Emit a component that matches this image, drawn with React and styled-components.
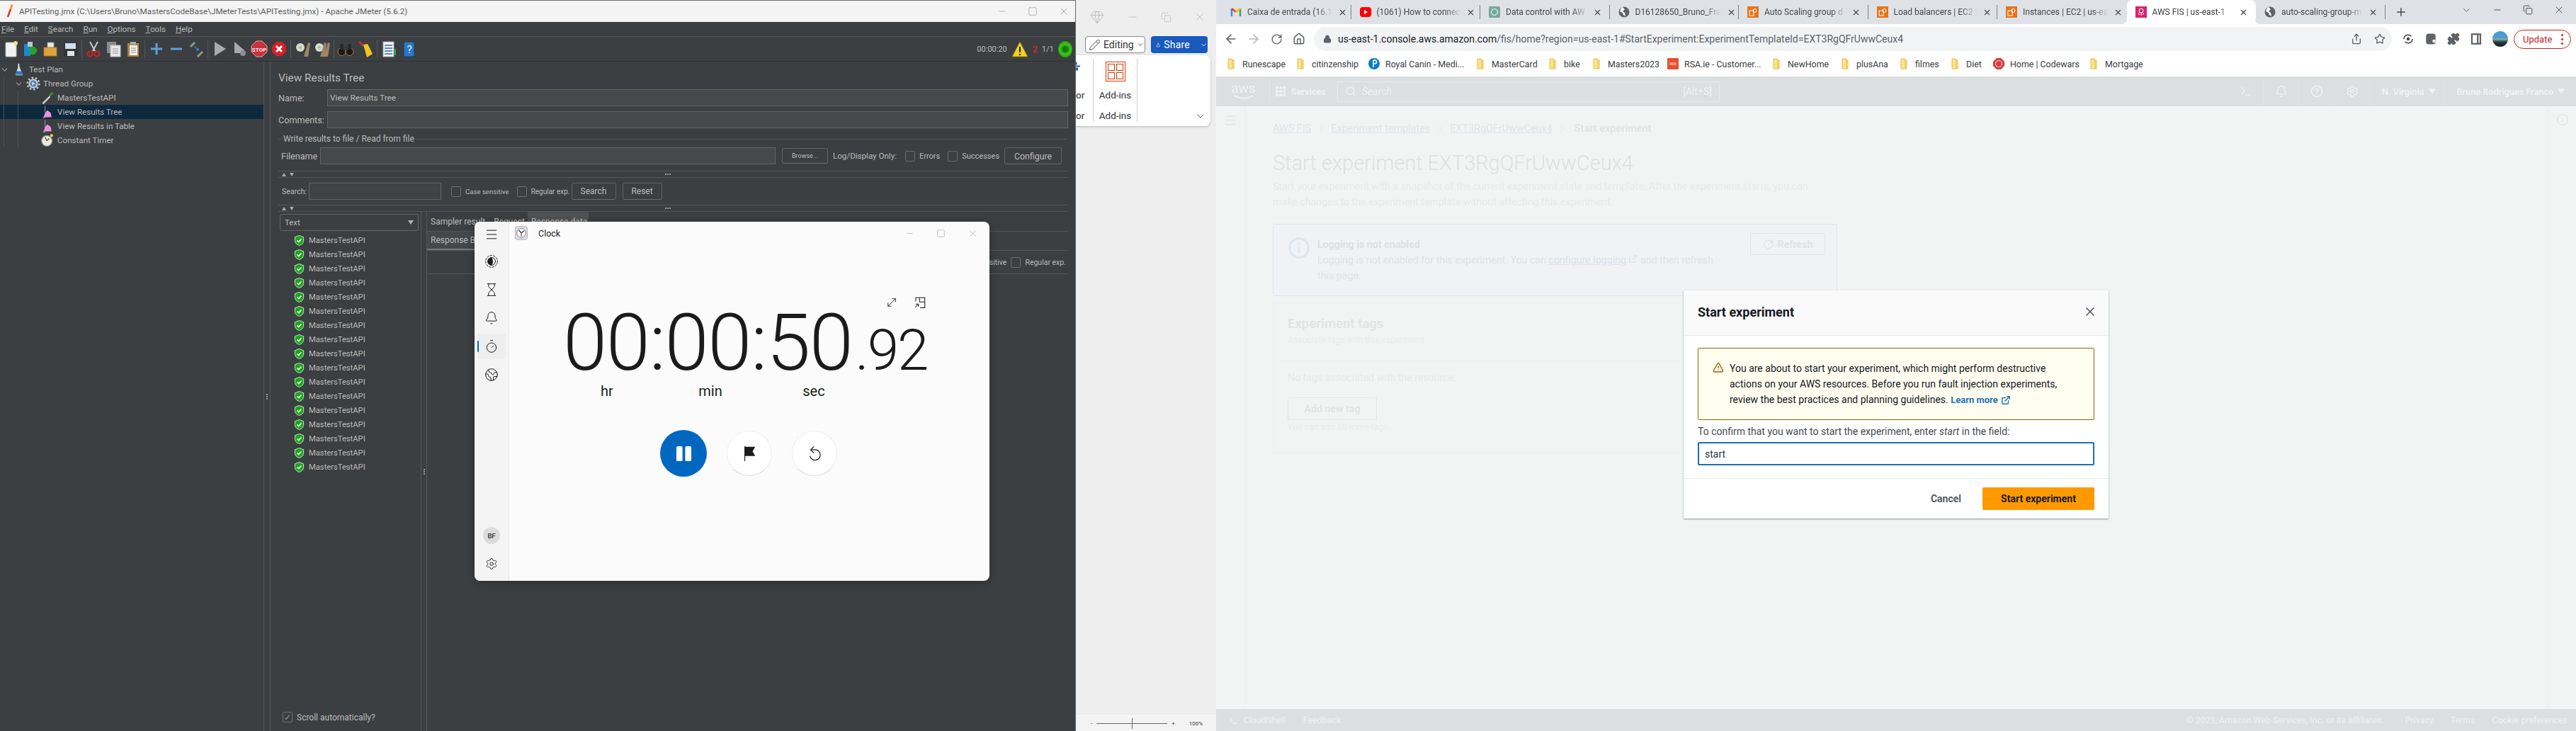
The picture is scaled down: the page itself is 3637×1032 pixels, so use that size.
import React from "react";
import styled, { createGlobalStyle } from "styled-components";
import {
  ArrowLeft, ArrowRight, Bell, ChevronDown, CircleHelp, Copy, Earth, ExternalLink, Gem,
  Home, Hourglass, Lock, Menu, Minus, MoveDiagonal, Pencil, Plus, Puzzle, RotateCw, Search,
  Settings, Share, Square, Star, Terminal, Timer, TriangleAlert, X, Info, ChevronRight,
} from "lucide-react";

const UI = `"Roboto", "Liberation Sans", sans-serif`;

const GlobalStyle = createGlobalStyle`
  html, body { margin: 0; padding: 0; overflow: hidden; background: #eeeeee; }
  * { box-sizing: border-box; }
`;

const Desktop = styled.div`
  position: relative;
  width: 3637px;
  height: 1032px;
  overflow: hidden;
  font-family: ${UI};
`;

const Win = styled.section`
  position: absolute;
  left: ${(p) => p.$x}px;
  top: ${(p) => p.$y}px;
  width: ${(p) => p.$w}px;
  height: ${(p) => p.$h}px;
  display: flex;
  flex-direction: column;
`;

/* ---------- JMeter ---------- */

const JMeterWin = styled(Win)`
  background: #3c3f41;
  color: #bbbbbb;
  font-size: 12px;
  border-top: 1px solid #6b6b6b;
  border-right: 1px solid #666;
`;
const JTitle = styled.div`
  height: 30px;
  background: #f4f4f4;
  color: #5c5c5c;
  display: flex;
  align-items: center;
  padding-left: 8px;
  font-size: 11.7px;
  flex: none;
  svg { flex: none; }
`;
const JTitleText = styled.span`
  margin-left: 7px;
  flex: 1;
`;
const WinBtns = styled.div`
  display: flex;
  align-items: center;
  color: ${(p) => p.$color || "#8a8a8a"};
  gap: ${(p) => p.$gap || 30}px;
  padding-right: ${(p) => p.$pr || 8}px;
`;
const JMenu = styled.div`
  height: 21px;
  display: flex;
  align-items: center;
  gap: 14px;
  padding-left: 2px;
  border-bottom: 1px solid #555;
  font-size: 11.6px;
  flex: none;
  u { text-underline-offset: 1px; }
`;
const JTools = styled.div`
  height: 35px;
  display: flex;
  align-items: center;
  padding-left: 1px;
  border-bottom: 1px solid #2f3234;
  flex: none;
`;
const ToolSlot = styled.div`
  width: 28px;
  height: 28px;
  display: flex;
  align-items: center;
  justify-content: center;
`;
const ToolSep = styled.div`
  width: 1px;
  height: 26px;
  background: #54575a;
  margin: 0 2px;
`;
const Status = styled.div`
  margin-left: auto;
  display: flex;
  align-items: center;
  gap: 6px;
  padding-right: 4px;
  font-size: 11px;
`;
const StatusRed = styled.span`
  color: #ff2020;
  font-size: 13px;
`;
const Ball = styled.span`
  width: 20px;
  height: 23px;
  border-radius: 50%;
  background: radial-gradient(circle, #0c7d0c 0 22%, #41c41d 45%, #1f9c0d 80%, #127a09);
`;
const JBody = styled.div`
  flex: 1;
  display: flex;
  min-height: 0;
`;
const TreePane = styled.div`
  width: 373px;
  flex: none;
  padding-top: 1px;
  position: relative;
  border-right: 1px solid #555;
  font-size: 11.6px;
`;
const TreeRow = styled.div`
  height: 20px;
  display: flex;
  align-items: center;
  padding-left: ${(p) => p.$indent}px;
  gap: 4px;
  background: ${(p) => (p.$selected ? "#0d293e" : "transparent")};
`;
const TreeArrow = styled.span`
  width: 13px;
  display: flex;
  color: #9a9a9a;
`;
const TreeGuide = styled.i`
  position: absolute;
  left: ${(p) => p.$x}px;
  top: ${(p) => p.$top}px;
  height: ${(p) => p.$h}px;
  width: 1px;
  background: #4d5153;
`;
const VSplit = styled.div`
  width: 9px;
  flex: none;
  display: flex;
  align-items: center;
  justify-content: center;
  border-right: 1px solid #555;
  ${(p) => (p.$both ? "border-left: 1px solid #555;" : "")}
  color: #9a9a9a;
  position: relative;
`;
const Dots = styled.span`
  display: flex;
  flex-direction: ${(p) => (p.$row ? "row" : "column")};
  gap: 1px;
  i { width: 2px; height: 2px; background: #b5b5b5; border-radius: 50%; display: block; }
`;
const RightPane = styled.div`
  flex: 1;
  min-width: 0;
  padding: 0 10px 0 11px;
  display: flex;
  flex-direction: column;
`;
const PaneTitle = styled.div`
  font-size: 15.4px;
  height: 22px;
  line-height: 22px;
  margin-top: 12px;
  flex: none;
`;
const FormRow = styled.div`
  display: flex;
  align-items: center;
  height: ${(p) => p.$h || 24}px;
  margin-top: ${(p) => p.$mt || 0}px;
  padding-left: ${(p) => p.$pl || 0}px;
  flex: none;
  font-size: 12.6px;
`;
const FormLabel = styled.span`
  width: ${(p) => p.$w}px;
  flex: none;
  font-size: ${(p) => p.$size || 12.6}px;
`;
const Field = styled.div`
  flex: ${(p) => (p.$w ? "none" : 1)};
  width: ${(p) => (p.$w ? `${p.$w}px` : "auto")};
  height: 100%;
  background: ${(p) => p.$bg || "#45494a"};
  border: 1px solid #646464;
  display: flex;
  align-items: center;
  padding-left: 3px;
  font-size: 11.8px;
`;
const Legend = styled.div`
  display: flex;
  align-items: center;
  margin-top: 5px;
  height: 20px;
  font-size: 12px;
  flex: none;
  &::before { content: ""; width: 4px; height: 1px; background: #555; margin-right: 3px; }
  &::after { content: ""; flex: 1; height: 1px; background: #555; margin: 0 2px 0 2px; }
`;
const JButton = styled.div`
  height: ${(p) => p.$h || 24}px;
  width: ${(p) => p.$w}px;
  flex: none;
  border: 1px solid #5e6060;
  border-bottom-color: #6a6c6c;
  border-radius: 3px;
  background: #3c3f41;
  display: flex;
  align-items: center;
  justify-content: center;
  font-size: ${(p) => p.$size || 12}px;
  margin-left: ${(p) => p.$ml || 0}px;
`;
const CheckBox = styled.span`
  width: 14px;
  height: 15px;
  flex: none;
  border: 1px solid #6b6b6b;
  border-radius: 2px;
  margin-left: ${(p) => p.$ml || 0}px;
  margin-right: 6px;
  display: flex;
  align-items: center;
  justify-content: center;
  color: #8f8f8f;
  font-size: 12px;
`;
const SmallText = styled.span`
  font-size: ${(p) => p.$size || 10.5}px;
  white-space: nowrap;
  margin-left: ${(p) => p.$ml || 0}px;
  margin-right: ${(p) => p.$mr || 0}px;
`;
const HSplit = styled.div`
  height: 10px;
  margin-top: ${(p) => p.$mt}px;
  flex: none;
  border-top: 1px solid #555;
  border-bottom: 1px solid #555;
  display: flex;
  align-items: center;
  position: relative;
  padding-left: 5px;
  gap: 5px;
`;
const HDots = styled.span`
  position: absolute;
  left: 546px;
  top: 3px;
`;
const Tri = styled.i`
  width: 0;
  height: 0;
  border-left: 3.5px solid transparent;
  border-right: 3.5px solid transparent;
  ${(p) => (p.$down ? "border-top: 5px solid #aaa;" : "border-bottom: 5px solid #aaa;")}
`;
const ResultSplit = styled.div`
  flex: 1;
  display: flex;
  min-height: 0;
`;
const ResultList = styled.div`
  width: 201px;
  flex: none;
  display: flex;
  flex-direction: column;
  padding: 3px 0 12px 2px;
  font-size: 11.2px;
`;
const Combo = styled.div`
  height: 24px;
  width: 196px;
  flex: none;
  border: 1px solid #666;
  border-radius: 3px;
  background: #3c3f41;
  display: flex;
  align-items: center;
  justify-content: space-between;
  padding: 0 6px;
  font-size: 11.4px;
`;
const ComboTri = styled.i`
  border-left: 4.5px solid transparent;
  border-right: 4.5px solid transparent;
  border-top: 6px solid #b5b5b5;
`;
const ResultRow = styled.div`
  height: 20px;
  display: flex;
  align-items: center;
  gap: 6px;
  padding-left: 20px;
`;
const ResultRows = styled.div`
  margin-top: 3px;
  flex: 1;
`;
const ScrollAuto = styled.div`
  display: flex;
  align-items: center;
  padding-left: 4px;
  font-size: 12px;
`;
const ResultDetail = styled.div`
  flex: 1;
  min-width: 0;
  display: flex;
  flex-direction: column;
`;
const TabsRow = styled.div`
  height: 28px;
  display: flex;
  align-items: center;
  border-bottom: 1px solid #555;
  padding-left: 5px;
  flex: none;
  font-size: 12px;
  gap: 12px;
  white-space: nowrap;
`;
const ActiveTab = styled.span`
  background: #4e5254;
  height: 100%;
  width: 86px;
  display: flex;
  align-items: center;
  padding-left: 5px;
  margin-left: -8px;
`;
const SubTab = styled.div`
  height: 27px;
  display: flex;
  flex: none;
  border-bottom: 1px solid #555;
`;
const SubTabLabel = styled.span`
  width: 90px;
  height: 100%;
  display: flex;
  align-items: center;
  padding-left: 5px;
  font-size: 12px;
  white-space: nowrap;
  background: #45484a;
  border-bottom: 2px solid #75787a;
`;
const DetailSearch = styled.div`
  height: 33px;
  flex: none;
  display: flex;
  align-items: center;
  justify-content: flex-end;
  border-bottom: 1px solid #555;
  padding-right: 3px;
  font-size: 13px;
`;

/* ---------- Word ---------- */

const WordWin = styled(Win)`
  background: #eeeeee;
  color: #333;
`;
const WordTop = styled.div`
  height: 48px;
  display: flex;
  align-items: center;
  justify-content: flex-end;
  color: #b5b5b5;
  flex: none;
  padding: 0 14px 0 0;
  gap: 31px;
`;
const WordActions = styled.div`
  display: flex;
  gap: 8px;
  height: 24px;
  margin-top: 3px;
  padding-left: 13px;
  flex: none;
`;
const EditingBtn = styled.div`
  width: 85px;
  border: 1px solid #8a8a8a;
  border-radius: 4px;
  background: #fff;
  display: flex;
  align-items: center;
  gap: 4px;
  padding-left: 4px;
  font-size: 14px;
`;
const ShareBtn = styled.div`
  width: 80px;
  background: #185abd;
  color: #fff;
  border-radius: 4px;
  display: flex;
  align-items: center;
  gap: 5px;
  padding-left: 7px;
  font-size: 14px;
  letter-spacing: 0.2px;
`;
const ShareCaret = styled.span`
  margin-left: 9px;
  display: flex;
`;
const Ribbon = styled.div`
  margin-top: 3px;
  width: 190px;
  height: 100px;
  background: #fff;
  border-radius: 0 8px 8px 0;
  box-shadow: 0 1px 3px rgba(0, 0, 0, 0.25);
  display: flex;
  flex: none;
  font-size: 13.5px;
`;
const RibbonCut = styled.div`
  width: 25px;
  flex: none;
  margin: 5px 0 6px;
  border-right: 1px solid #d0d0d0;
  display: flex;
  flex-direction: column;
  align-items: flex-start;
`;
const RibbonGroup = styled.div`
  width: 62px;
  flex: none;
  margin: 5px 0 6px;
  border-right: 1px solid #d0d0d0;
  display: flex;
  flex-direction: column;
  align-items: center;
`;
const RibbonIcon = styled.div`
  height: 32px;
  margin-top: 4px;
  display: flex;
`;
const RibbonText = styled.div`
  margin-top: 5px;
  height: 20px;
  line-height: 20px;
`;
const RibbonFoot = styled.div`
  margin-top: auto;
  height: 18px;
  line-height: 18px;
`;
const RibbonEnd = styled.div`
  flex: 1;
  display: flex;
  align-items: flex-end;
  justify-content: flex-end;
  padding: 0 6px 6px 0;
`;
const WordStatus = styled.div`
  margin-top: auto;
  height: 22px;
  background: #f3f3f3;
  border-top: 1px solid #fff;
  display: flex;
  align-items: center;
  font-size: 8px;
  flex: none;
  padding-left: 21px;
  color: #333;
`;
const ZoomTrack = styled.div`
  width: 100px;
  height: 1px;
  background: #666;
  margin: 0 6px;
  position: relative;
  &::after { content: ""; position: absolute; left: 50px; top: -7px; width: 1px; height: 15px; background: #666; }
`;
const ZoomPct = styled.span`
  margin-left: 20px;
`;

/* ---------- Chrome ---------- */

const ChromeWin = styled(Win)`
  background: #fff;
  color: #3c4043;
`;
const TabStrip = styled.div`
  height: 34px;
  background: #dee1e6;
  display: flex;
  align-items: center;
  padding-left: 8px;
  flex: none;
`;
const Tab = styled.div`
  width: 182.5px;
  flex: none;
  position: relative;
  height: ${(p) => (p.$active ? 34 : 20)}px;
  align-self: ${(p) => (p.$active ? "flex-end" : "center")};
  display: flex;
  align-items: center;
  padding: 0 10px 0 12px;
  font-size: 12px;
  gap: 8px;
  border-right: 1px solid ${(p) => (p.$active || p.$noline ? "transparent" : "#7f8388")};
  background: ${(p) => (p.$active ? "#fff" : "transparent")};
  border-radius: ${(p) => (p.$active ? "8px 8px 0 0" : "0")};
  color: ${(p) => (p.$active ? "#3c4043" : "#45494e")};
  svg { flex: none; }
  ${(p) => p.$active && `
    &::before, &::after {
      content: "";
      position: absolute;
      bottom: 0;
      width: 8px;
      height: 8px;
    }
    &::before { left: -8px; background: radial-gradient(circle at 0 0, #dee1e6 8px, #fff 8.5px); }
    &::after { right: -8px; background: radial-gradient(circle at 100% 0, #dee1e6 8px, #fff 8.5px); }
  `}
`;
const TabLabel = styled.span`
  flex: 1;
  white-space: nowrap;
  -webkit-mask-image: linear-gradient(90deg, #000 82%, transparent);
  mask-image: linear-gradient(90deg, #000 82%, transparent);
`;
const NewTab = styled.div`
  width: 44px;
  display: flex;
  justify-content: center;
  color: #45494e;
`;
const ChromeCtl = styled.div`
  margin-left: auto;
  display: flex;
  align-items: center;
  gap: 29px;
  padding-right: 16px;
  color: #3c4043;
  height: 100%;
  padding-bottom: 6px;
`;
const UrlBar = styled.div`
  height: 38px;
  display: flex;
  align-items: center;
  flex: none;
  padding: 4px 8px 0 5px;
`;
const NavBtn = styled.div`
  width: 32px;
  display: flex;
  justify-content: center;
  color: ${(p) => (p.$off ? "#b5b8bc" : "#5f6368")};
  flex: none;
`;
const Omni = styled.div`
  flex: none;
  width: 1522px;
  height: 34px;
  margin-left: 5px;
  border-radius: 17px;
  background: #f1f3f4;
  display: flex;
  align-items: center;
  padding: 0 9px 0 13px;
  font-size: 14px;
  color: #5f6368;
  gap: 9px;
`;
const UrlHost = styled.span`
  color: #202124;
`;
const OmniRight = styled.div`
  margin-left: auto;
  display: flex;
  gap: 17px;
  color: #5f6368;
`;
const ExtIcons = styled.div`
  display: flex;
  align-items: center;
  gap: 14px;
  color: #5f6368;
  padding-left: 14px;
  flex: none;
`;
const Avatar = styled.span`
  width: 22px;
  height: 22px;
  border-radius: 50%;
  background: linear-gradient(180deg, #4b9bd0 0 45%, #8fb7b0 50%, #2c3a3e 70%, #16191a);
`;
const UpdatePill = styled.div`
  margin-left: 8px;
  width: 81px;
  height: 27px;
  flex: none;
  border: 1px solid #c5221f;
  border-radius: 14px;
  display: flex;
  align-items: center;
  color: #c5221f;
  font-size: 13px;
  padding-left: 12px;
  justify-content: space-between;
  padding-right: 10px;
`;
const KebabDots = styled.span`
  display: flex;
  flex-direction: column;
  gap: 3px;
  i { width: 3px; height: 3px; border-radius: 50%; background: #c5221f; display: block; }
`;
const Bookmarks = styled.div`
  height: 36px;
  display: flex;
  align-items: center;
  padding-left: 13px;
  flex: none;
  font-size: 12.4px;
  color: #3c4043;
`;
const Bookmark = styled.div`
  width: ${(p) => p.$w}px;
  flex: none;
  display: flex;
  align-items: center;
  gap: 8px;
  white-space: nowrap;
  svg { flex: none; }
`;

/* AWS console behind its modal backdrop */
const AwsNav = styled.div`
  height: 42px;
  background: #dcdfdf;
  color: #f0f2f2;
  display: flex;
  align-items: center;
  flex: none;
  font-size: 12.6px;
`;
const AwsLogo = styled.div`
  width: 59px;
  margin-left: 17px;
  height: 30px;
  display: flex;
  flex-direction: column;
  align-items: center;
  justify-content: center;
  border-right: 1px solid #e3e6e6;
  padding-right: 15px;
  font-size: 19px;
  line-height: 16px;
  flex: none;
`;
const AwsServices = styled.div`
  width: 95px;
  display: flex;
  align-items: center;
  gap: 7px;
  padding-left: 7px;
  font-weight: 700;
  flex: none;
`;
const AwsSearch = styled.div`
  width: 540px;
  height: 29px;
  border: 1px solid #e8eaea;
  border-radius: 2px;
  display: flex;
  align-items: center;
  padding: 0 10px;
  gap: 8px;
  flex: none;
  font-size: 14px;
`;
const AwsSearchText = styled.em`
  flex: 1;
`;
const AwsRight = styled.div`
  margin-left: auto;
  display: flex;
  align-items: center;
  font-weight: 700;
  height: 100%;
  padding-right: 4px;
`;
const AwsNavIcon = styled.div`
  width: 50px;
  height: 100%;
  display: flex;
  align-items: center;
  justify-content: center;
  border-right: 1px solid #e1e4e4;
`;
const AwsMenu = styled.div`
  display: flex;
  align-items: center;
  gap: 6px;
  height: 100%;
  padding: 0 12px 0 17px;
  border-right: ${(p) => (p.$last ? "none" : "1px solid #e1e4e4")};
`;
const SmallTri = styled.i`
  border-left: 5px solid transparent;
  border-right: 5px solid transparent;
  border-top: 8px solid #f0f2f2;
`;
const AwsContent = styled.div`
  flex: 1;
  min-height: 0;
  display: flex;
  background: #f2f4f4;
`;
const Rail = styled.div`
  width: ${(p) => p.$w}px;
  flex: none;
  color: #e3e6e6;
  ${(p) => (p.$right ? "border-left" : "border-right")}: 1px solid #ebeded;
  display: flex;
  justify-content: center;
  padding-top: 10px;
`;
const AwsMain = styled.div`
  flex: 1;
  min-width: 0;
  padding: 20px 0 0 39px;
`;
const Crumbs = styled.div`
  height: 22px;
  display: flex;
  align-items: center;
  gap: 5px;
  font-size: 14.4px;
  color: #dfe4e9;
  svg { color: #e4e7e7; }
`;
const CrumbLink = styled.span`
  text-decoration: underline;
`;
const CrumbNow = styled.span`
  color: #e2e4e4;
  font-weight: 700;
  margin-left: 3px;
`;
const PageTitle = styled.h1`
  margin: 18px 0 0;
  height: 40px;
  line-height: 40px;
  font-size: 29px;
  font-weight: 300;
  color: #dee0e0;
`;
const PageDesc = styled.p`
  margin: 2px 0 0;
  line-height: 22px;
  font-size: 14.2px;
  color: #e7e9e9;
`;
const InfoBox = styled.div`
  margin-top: 20px;
  width: 797px;
  height: 102px;
  background: #f0f2f6;
  border: 1px solid #e0e6ee;
  border-radius: 2px;
  padding: 17px 16px 0 20px;
  display: flex;
  color: #e0e2e6;
  font-size: 14.2px;
  line-height: 22px;
`;
const InfoGlyph = styled.span`
  flex: none;
  display: flex;
  height: 32px;
  color: #dde6ee;
`;
const InfoBody = styled.div`
  margin-left: 10px;
  flex: 1;
  svg { color: #d9e3ec; }
`;
const InfoHead = styled.div`
  font-weight: 700;
  color: #dcdfe3;
`;
const InfoLink = styled.span`
  color: #d9e3ec;
  text-decoration: underline;
`;
const RefreshBtn = styled.div`
  width: 106px;
  height: 31px;
  margin-top: -5px;
  border: 1px solid #e0e5ea;
  border-radius: 2px;
  display: flex;
  align-items: center;
  justify-content: center;
  gap: 5px;
  font-weight: 700;
  flex: none;
`;
const Card = styled.div`
  margin-top: 9px;
  width: 800px;
  height: 213px;
  border: 1px solid #eef0f0;
  border-radius: 2px;
`;
const CardHead = styled.div`
  height: 81px;
  padding: 16px 0 0 20px;
  border-bottom: 1px solid #eef0f0;
`;
const CardTitle = styled.div`
  font-size: 18.5px;
  font-weight: 700;
  height: 26px;
  line-height: 26px;
  color: #e2e4e4;
`;
const CardSub = styled.div`
  font-size: 12.2px;
  color: #e9ebeb;
  line-height: 18px;
  margin-top: 1px;
`;
const CardBody = styled.div`
  padding: 16px 0 0 20px;
  font-size: 14.2px;
  color: #e7e9e9;
`;
const TagBtn = styled.div`
  margin-top: 20px;
  width: 126px;
  height: 32px;
  border: 1px solid #e4e6e6;
  border-radius: 2px;
  display: flex;
  align-items: center;
  justify-content: center;
  font-weight: 700;
  color: #e2e4e4;
`;
const TagHint = styled.div`
  margin-top: 3px;
  font-size: 12.2px;
  color: #e9ebeb;
`;
const AwsFooter = styled.div`
  height: 31px;
  background: #dcdfdf;
  color: #eff1f1;
  display: flex;
  align-items: center;
  padding: 0 12px 0 17px;
  font-size: 12.4px;
  flex: none;
  gap: 8px;
`;
const FootLink = styled.span`
  margin-left: ${(p) => (p.$auto ? "auto" : `${p.$ml || 0}px`)};
  white-space: nowrap;
`;

/* start experiment modal */
const Modal = styled(Win)`
  background: #fff;
  box-shadow: 0 1px 2px rgba(0, 28, 36, 0.45);
  color: #16191f;
  font-family: ${UI};
`;
const ModalHead = styled.header`
  height: 64px;
  flex: none;
  background: #fafafa;
  border-bottom: 1px solid #eaeded;
  display: flex;
  align-items: center;
  justify-content: space-between;
  padding: 0 16px 3px 20px;
  font-size: 18px;
  font-weight: 700;
  svg { color: #545b64; }
`;
const ModalBody = styled.div`
  padding: 17px 20px 0;
  height: 137px;
  flex: 1;
`;
const Alert = styled.div`
  height: 102px;
  background: #fffdf0;
  border: 1px solid #8d6605;
  border-radius: 2px;
  display: flex;
  padding: 17px 8px 0 20px;
  font-size: 14px;
  line-height: 22px;
  gap: 8px;
  svg { color: #8d6605; flex: none; margin-top: 2px; }
`;
const LearnMore = styled.span`
  color: #1e73b8;
  font-weight: 700;
  font-size: 13px;
  display: inline-flex;
  align-items: center;
  gap: 4px;
  svg { color: #1e73b8; margin-top: 0; }
`;
const ConfirmLabel = styled.div`
  margin-top: 5px;
  height: 22px;
  line-height: 22px;
  font-size: 14px;
  color: #444b53;
  margin-bottom: 4px;
`;
const ConfirmInput = styled.div`
  height: 33px;
  border: 2px solid #1c6fb5;
  border-radius: 2px;
  padding-left: 8px;
  display: flex;
  align-items: center;
  font-size: 14px;
  color: #2f3640;
`;
const ModalFoot = styled.footer`
  height: 57px;
  flex: none;
  border-top: 1px solid #eaeded;
  display: flex;
  align-items: center;
  justify-content: flex-end;
  padding: 0 20px;
  font-weight: 700;
  font-size: 14px;
`;
const CancelBtn = styled.span`
  color: #545b64;
  margin-right: 30px;
`;
const PrimaryBtn = styled.div`
  width: 158px;
  height: 32px;
  background: #ff9900;
  border-radius: 2px;
  display: flex;
  align-items: center;
  justify-content: center;
  color: #16191f;
`;

/* ---------- Clock ---------- */

const ClockWin = styled(Win)`
  flex-direction: row;
  background: #fbfbfb;
  border-radius: 8px;
  overflow: hidden;
  color: #1b1b1b;
  box-shadow: 0 2px 12px rgba(0, 0, 0, 0.3);
`;
const ClockSide = styled.nav`
  width: 49px;
  flex: none;
  background: #f4f4f4;
  border-right: 1px solid #e8e8e8;
  display: flex;
  flex-direction: column;
  align-items: center;
  padding-bottom: 4px;
`;
const SideItem = styled.div`
  width: 40px;
  height: ${(p) => (p.$active ? 36 : p.$h || 40)}px;
  display: flex;
  align-items: center;
  justify-content: center;
  position: relative;
  border-radius: 4px;
  flex: none;
  margin: ${(p) => (p.$auto ? "auto 0 0" : p.$active ? "2px 0" : "0")};
  background: ${(p) => (p.$active ? "#eeeeee" : "transparent")};
  &::before {
    content: ${(p) => (p.$active ? '""' : "none")};
    position: absolute;
    left: 0;
    top: 10px;
    width: 2px;
    height: 16px;
    background: #0067c0;
    border-radius: 2px;
  }
`;
const Initials = styled.span`
  width: 24px;
  height: 24px;
  border-radius: 50%;
  background: #dcdcdc;
  display: flex;
  align-items: center;
  justify-content: center;
  font-size: 9.5px;
  font-weight: 500;
  color: #333;
`;
const ClockMain = styled.div`
  flex: 1;
  min-width: 0;
  display: flex;
  flex-direction: column;
`;
const ClockTitle = styled.div`
  height: 32px;
  flex: none;
  display: flex;
  align-items: center;
  padding-left: 7px;
  gap: 14px;
  font-size: 12.5px;
`;
const ClockTitleName = styled.span`
  flex: 1;
`;
const ExpandRow = styled.div`
  margin-top: 72px;
  height: 20px;
  flex: none;
  display: flex;
  justify-content: flex-end;
  align-items: center;
  gap: 22px;
  padding-right: 89px;
`;
const TimeRow = styled.div`
  margin-top: -3px;
  height: 100px;
  line-height: 100px;
  padding-left: 76px;
  font-size: 112px;
  font-weight: 300;
  letter-spacing: -1.4px;
  white-space: nowrap;
  flex: none;
  color: #1b1b1b;
`;
const Fraction = styled.span`
  font-size: 80px;
  letter-spacing: -2px;
  margin-left: 4px;
`;
const UnitRow = styled.div`
  margin-top: 5px;
  display: flex;
  padding-left: 65px;
  font-size: 20px;
  flex: none;
  height: 26px;
  line-height: 26px;
`;
const Unit = styled.span`
  width: 146px;
  text-align: center;
`;
const ButtonRow = styled.div`
  margin-top: 42px;
  display: flex;
  align-items: center;
  padding-left: 213px;
  gap: 28px;
  flex: none;
`;
const RoundBtn = styled.div`
  width: ${(p) => (p.$primary ? 66 : 64)}px;
  height: ${(p) => (p.$primary ? 66 : 64)}px;
  border-radius: 50%;
  display: flex;
  align-items: center;
  justify-content: center;
  background: ${(p) => (p.$primary ? "#0067c0" : "#fff")};
  border: ${(p) => (p.$primary ? "none" : "1px solid #ececec")};
  border-bottom-color: #d4d4d4;
  color: ${(p) => (p.$primary ? "#fff" : "#1b1b1b")};
`;

/* ---------- drawn icons ---------- */

const svg = (content, size = 24, box = 24) => (
  <svg width={size} height={size} viewBox={`0 0 ${box} ${box}`}>{content}</svg>
);

const FolderIcon = () => svg(
  <g>
    <path d="M4 1h5l1 2h2v12H4z" fill="#fde293" stroke="#e8b93e" strokeWidth="1" />
    <path d="M10 3v12" stroke="#e8b93e" />
  </g>, 16, 16);

const ShieldIcon = () => svg(
  <g>
    <path d="M8 .5 14.500 3v5c0 3.800-2.800 6.200-6.500 7.500C4.300 14.200 1.500 11.800 1.500 8V3z" fill="#18a818" stroke="#d8e8d8" />
    <path d="m4.800 8 2.300 2.300 4-4.300" fill="none" stroke="#fff" strokeWidth="1.700" />
  </g>, 15, 16);

const ServicesGrid = () => svg(
  <g fill="#f0f2f2">
    {[1, 6.500, 12].map((x) => [1, 6.500, 12].map((y) => (
      <rect key={`${x}-${y}`} x={x} y={y} width="4" height="4" />
    )))}
  </g>, 16, 17);

const ToolIcons = [
  [
    <g key="n"><rect x="5" y="3" width="15" height="20" rx="1" fill="#f2f2f2" stroke="#bbb" /><circle cx="19" cy="4" r="3" fill="#f6e27a" /></g>,
    <g key="t"><rect x="3" y="5" width="9" height="17" fill="#1e88c9" /><rect x="8" y="2" width="7" height="7" fill="#b9c6cf" /><path d="M11 9h7l4 5-4 6h-7z" fill="#22a52b" /></g>,
    <g key="o"><path d="M8 3h9v9H8z" fill="#e8e8e8" stroke="#999" /><path d="M3 10h18v12H3z" fill="#dca43a" stroke="#a97a22" /></g>,
    <g key="s"><rect x="3" y="3" width="19" height="20" rx="1" fill="#30353a" /><rect x="5" y="4" width="15" height="8" fill="#cfe0f2" /><rect x="8" y="15" width="10" height="7" fill="#dfe3e6" /></g>,
  ],
  [
    <g key="c" fill="none"><path d="m7 2 7 13M18 2l-7 13" stroke="#c9c9c9" strokeWidth="2" /><circle cx="7" cy="19" r="3.500" stroke="#d61e1e" strokeWidth="2" /><circle cx="17" cy="19" r="3.500" stroke="#d61e1e" strokeWidth="2" /></g>,
    <g key="cp"><rect x="3" y="2" width="13" height="16" fill="#8b8b8b" /><rect x="8" y="7" width="14" height="16" fill="#e8e8e8" stroke="#bbb" /><path d="M11 12h8M11 15h8M11 18h8" stroke="#999" /></g>,
    <g key="p"><rect x="4" y="4" width="16" height="19" fill="#b57f37" /><rect x="7" y="7" width="11" height="14" fill="#f2f2f2" /><rect x="8" y="2" width="8" height="4" fill="#aaa" /><path d="M9 11h7M9 14h7M9 17h7" stroke="#888" /></g>,
  ],
  [
    <path key="a" d="M12 4v16M4 12h16" stroke="#5d9fd8" strokeWidth="3" />,
    <path key="m" d="M4 12h16" stroke="#5d9fd8" strokeWidth="3" />,
    <g key="e"><path d="m4 9 6-6" stroke="#8a9a8a" strokeWidth="3" /><path d="m14 23 7-7" stroke="#8a9a8a" strokeWidth="3" /><path d="m10 9 5 5m0-3v3h-3" stroke="#3b82d0" strokeWidth="1.500" fill="none" /></g>,
  ],
  [
    <path key="pl" d="M5 2 21 12 5 22z" fill="#a9aaab" />,
    <g key="pn"><path d="M5 2 19 14l-4 4H5z" fill="#a9aaab" /><circle cx="17" cy="18" r="4" fill="#8b8d8e" /></g>,
    <g key="st"><path d="M8 1h8l7 7v8l-7 7H8l-7-7V8z" fill="#c8323c" stroke="#e2a5a9" /><text x="12" y="15.500" textAnchor="middle" fontSize="8" fontWeight="700" fill="#eee" fontFamily={UI}>STOP</text></g>,
    <g key="sd"><path d="M8 2h8l6 6v8l-6 6H8l-6-6V8z" fill="#d61f26" /><path d="m8 8 8 8M16 8l-8 8" stroke="#fff" strokeWidth="3" /></g>,
  ],
  [
    <g key="cl"><circle cx="9" cy="10" r="6" fill="#d8d8d8" /><circle cx="9" cy="10" r="2" fill="#8fd14f" /><path d="M14 23 20 3l3 1-3 19z" fill="#a08563" /></g>,
    <g key="ca"><circle cx="8" cy="10" r="6" fill="#d8d8d8" /><circle cx="8" cy="10" r="2" fill="#8fd14f" /><path d="M9 23 15 3l3 1-3 19zM14 23 20 3l3 1-3 19z" fill="#a08563" /></g>,
  ],
  [
    <g key="b"><circle cx="6.500" cy="16" r="5.500" fill="#1c1a18" stroke="#a87b52" /><circle cx="17.500" cy="16" r="5.500" fill="#1c1a18" stroke="#a87b52" /><rect x="4" y="5" width="5" height="8" fill="#2c2a28" /><rect x="15" y="5" width="5" height="8" fill="#2c2a28" /><rect x="9" y="8" width="6" height="6" fill="#3c3a38" /></g>,
    <g key="br"><path d="m3 2 7 6" stroke="#b5372a" strokeWidth="3" /><path d="m9 6 6-1 7 14-8 5z" fill="#efc71d" /></g>,
  ],
  [
    <g key="l"><rect x="4" y="2" width="15" height="21" fill="#f4f4f4" stroke="#aaa" /><path d="M6 7h11M6 11h11M6 15h11M6 19h11" stroke="#2867b2" strokeWidth="1.500" /><rect x="19" y="12" width="3" height="9" fill="#2fa243" /></g>,
    <g key="h"><rect x="5" y="2" width="15" height="21" fill="#2a77c4" stroke="#123a62" /><text x="13" y="18" textAnchor="middle" fontSize="15" fill="#eaf2fb" fontFamily={UI}>?</text></g>,
  ],
];

const FlaskIcon = () => svg(
  <g>
    <path d="M10 2h2l1 7 5 11c.400 1.500 0 2-1 2H7c-1 0-1.400-.500-1-2l4-11z" fill="#d8dde2" />
    <path d="M7.500 15h9l2 6H6z" fill="#2b78c8" />
  </g>, 20);
const GearIcon = () => svg(
  <g>
    <circle cx="12" cy="12" r="8" fill="#c7ccd2" />
    <circle cx="12" cy="12" r="10" fill="none" stroke="#c7ccd2" strokeWidth="3" strokeDasharray="3 3.280" />
    <circle cx="12" cy="12" r="5.500" fill="#4d83c4" />
    <path d="M10 9v6l5-3z" fill="#dde4ec" />
  </g>, 20);
const PipetteIcon = () => svg(
  <g>
    <path d="m3 21 12-12 2 2L5 23z" fill="#d0d0d0" />
    <path d="m14 8 5-6 3 3-6 5z" fill="#3f8f41" />
  </g>, 20);
const ChartIcon = () => svg(
  <g>
    <path d="M8 2v20H4" fill="none" stroke="#aab" />
    <path d="M4 21c3 0 3-8 8-12l3 3c2-1 3 2 4 9z" fill="#ef8fe0" />
  </g>, 20);
const WatchIcon = () => svg(
  <g>
    <circle cx="11" cy="13" r="9" fill="#ecebd8" stroke="#8d8d8d" strokeWidth="1.500" />
    <path d="M11 13 8 7M11 13l4-4" stroke="#444" strokeWidth="1.500" />
    <circle cx="19" cy="4" r="2.500" fill="#f4d23a" />
  </g>, 20);

const ClockAppIcon = () => svg(
  <g>
    <rect x="2" y="1" width="20" height="22" rx="3" fill="#d8dee4" stroke="#9aa4ad" />
    <circle cx="12" cy="12" r="7.500" fill="#fff" stroke="#6b7680" />
    <path d="M12 12 8 7M12 12l5-4" stroke="#333" strokeWidth="1.500" />
    <path d="M12 12v6" stroke="#d8382e" strokeWidth="1.500" />
  </g>, 20);

const GmailIcon = () => svg(
  <g fill="none" strokeWidth="2.500">
    <path d="M2 14V3" stroke="#4285f4" />
    <path d="M14 14V3" stroke="#34a853" />
    <path d="M2 3l6 5" stroke="#ea4335" />
    <path d="M14 3 8 8" stroke="#fbbc04" />
  </g>, 16, 16);
const YoutubeIcon = () => svg(
  <g>
    <rect y="1" width="16" height="14" rx="4" fill="#f00" />
    <path d="M6 5v6l5-3z" fill="#fff" />
  </g>, 16, 16);
const GptIcon = () => svg(
  <g>
    <rect width="16" height="16" rx="2" fill="#74aa9c" />
    <circle cx="8" cy="8" r="4.500" fill="none" stroke="#fff" strokeWidth="1.200" strokeDasharray="3 1" />
  </g>, 16, 16);
const GlobeIcon = () => svg(
  <g>
    <circle cx="8" cy="8" r="7.500" fill="#5f6368" />
    <path d="M6 1 9 4 6 7l3 2 1 5-3-2-1-3-4-2 2-5z" fill="#fff" />
  </g>, 16, 16);
const AwsTabIcon = () => svg(
  <g>
    <rect width="16" height="16" fill="#e5741a" />
    <rect x="3" y="6" width="6" height="7" fill="none" stroke="#fff" />
    <circle cx="10.500" cy="6" r="2.500" fill="none" stroke="#fff" />
  </g>, 16, 16);
const FisIcon = () => svg(
  <g>
    <rect width="16" height="16" fill="#d6246e" />
    <circle cx="8" cy="6" r="3" fill="none" stroke="#fff" />
    <path d="M5 9v3M8 9v4M11 9v3" stroke="#fff" />
  </g>, 16, 16);
const RoyalIcon = () => svg(
  <g>
    <circle cx="8" cy="8" r="8" fill="#0a7cc4" />
    <path d="M7 3v10M7 3h2a2.500 2.500 0 0 1 0 5H7" fill="none" stroke="#fff" strokeWidth="1.600" />
  </g>, 16, 16);
const RsaIcon = () => svg(
  <g>
    <rect width="16" height="16" rx="1" fill="#e5502c" />
    <text x="8" y="10" fontSize="5" textAnchor="middle" fill="#fff" fontFamily={UI}>RSA</text>
  </g>, 16, 16);
const CodewarsIcon = () => svg(
  <g>
    <path d="M5 0h6l5 5v6l-5 5H5l-5-5V5z" fill="#d63b3b" />
    <circle cx="8" cy="8" r="4.500" fill="none" stroke="#fff" strokeWidth="1.200" strokeDasharray="2 1" />
  </g>, 16, 16);

const AddInsIcon = () => svg(
  <g fill="none" stroke="#d83b01" strokeWidth="1">
    <rect x=".5" y=".5" width="27" height="27" />
    <rect x="3.500" y="3.500" width="9" height="9" />
    <rect x="15.500" y="3.500" width="9" height="9" />
    <rect x="3.500" y="15.500" width="9" height="9" />
    <rect x="15.500" y="15.500" width="9" height="9" />
  </g>, 28, 28);

const BlueCut = () => svg(
  <g fill="#185abd">
    <rect x="0" y="1" width="3" height="8" />
    <rect x="0" y="11" width="12" height="4" />
    <rect x="0" y="17" width="6" height="8" />
  </g>, 14, 28);

const FocusIcon = () => svg(
  <g fill="none" stroke="#1b1b1b" strokeWidth="1.200">
    <circle cx="12" cy="12" r="10" strokeDasharray="4 1.500" />
    <circle cx="12" cy="12" r="6.500" />
    <path d="M12 5.500a6.500 6.500 0 0 0 0 13c3-2 3-9 0-13z" fill="#1b1b1b" stroke="none" />
  </g>, 20);
const MiniIcon = () => svg(
  <g fill="none" stroke="#1b1b1b" strokeWidth="1.400">
    <path d="M4 10V3h17v19h-9" />
    <path d="M11 3v8h10" />
    <path d="m3 21 6-6M4 15h5v5" />
  </g>, 18);
const FlagIcon = () => svg(
  <g>
    <path d="M5 1v23" stroke="#1b1b1b" strokeWidth="1.300" />
    <path d="M5 2h16l-4 7 4 7H5z" fill="#1b1b1b" />
  </g>, 22);
const ResetIcon = () => svg(
  <g fill="none" stroke="#1b1b1b" strokeWidth="1.300">
    <path d="M7 6.500h6a8 8 0 1 1-8 9.500" />
    <path d="M11 1.500 6 6.500l5 5" />
  </g>, 22);
const PauseIcon = () => svg(
  <g fill="#fff">
    <rect x="1" y="1" width="9" height="22" rx="2" />
    <rect x="14" y="1" width="9" height="22" rx="2" />
  </g>, 23);
const ExtSync = () => svg(
  <g fill="none" stroke="#444" strokeWidth="2">
    <path d="M4 12a8 8 0 0 1 14-5M20 12a8 8 0 0 1-14 5" />
    <circle cx="12" cy="12" r="2" fill="#444" />
  </g>, 18);
const ExtVideo = () => svg(
  <g>
    <rect x="3" y="2" width="18" height="20" rx="5" fill="#5f6368" />
    <circle cx="18" cy="16" r="3" fill="#fff" />
  </g>, 18);
const SidePanel = () => svg(
  <g fill="none" stroke="#5f6368" strokeWidth="3">
    <rect x="4" y="3" width="16" height="18" />
    <path d="M15 3v18" />
  </g>, 18);

/* ---------- data ---------- */

const MENU = [["F", "ile"], ["E", "dit"], ["S", "earch"], ["R", "un"], ["O", "ptions"], ["T", "ools"], ["H", "elp"]];

const RESULT_ROWS = Array.from({ length: 17 }, (_, i) => i);

const TABS = [
  { icon: <GmailIcon />, label: "Caixa de entrada (16.1" },
  { icon: <YoutubeIcon />, label: "(1061) How to connec" },
  { icon: <GptIcon />, label: "Data control with AW" },
  { icon: <GlobeIcon />, label: "D16128650_Bruno_Fra" },
  { icon: <AwsTabIcon />, label: "Auto Scaling group d" },
  { icon: <AwsTabIcon />, label: "Load balancers | EC2 |" },
  { icon: <AwsTabIcon />, label: "Instances | EC2 | us-ea", noline: true },
  { icon: <FisIcon />, label: "AWS FIS | us-east-1", active: true },
  { icon: <GlobeIcon />, label: "auto-scaling-group-m" },
];

const BOOKMARKS = [
  { w: 98, icon: <FolderIcon />, label: "Runescape" },
  { w: 104, icon: <FolderIcon />, label: "citinzenship" },
  { w: 150, icon: <RoyalIcon />, label: "Royal Canin - Medi..." },
  { w: 102, icon: <FolderIcon />, label: "MasterCard" },
  { w: 62, icon: <FolderIcon />, label: "bike" },
  { w: 108, icon: <FolderIcon />, label: "Masters2023" },
  { w: 146, icon: <RsaIcon />, label: "RSA.ie - Customer..." },
  { w: 97, icon: <FolderIcon />, label: "NewHome" },
  { w: 83, icon: <FolderIcon />, label: "plusAna" },
  { w: 72, icon: <FolderIcon />, label: "filmes" },
  { w: 62, icon: <FolderIcon />, label: "Diet" },
  { w: 134, icon: <CodewarsIcon />, label: "Home | Codewars" },
  { w: 90, icon: <FolderIcon />, label: "Mortgage" },
];

const SIDE_ITEMS = [
  { icon: <FocusIcon /> },
  { icon: <Hourglass size={20} strokeWidth={1.2} /> },
  { icon: <Bell size={20} strokeWidth={1.2} /> },
  { icon: <Timer size={20} strokeWidth={1.2} />, active: true },
  { icon: <Earth size={20} strokeWidth={1.2} /> },
];

const JMeter = () => (
  <JMeterWin $x={0} $y={0} $w={1519} $h={1032}>
    <JTitle>
      <svg width="12" height="20" viewBox="0 0 12 20"><path d="M9 1 3 18" stroke="#d8382e" strokeWidth="2.500" /><path d="M9 1 7 7" stroke="#f0a02c" strokeWidth="2.500" /></svg>
      <JTitleText>APITesting.jmx (C:\Users\Bruno\MastersCodeBase\JMeterTests\APITesting.jmx) - Apache JMeter (5.6.2)</JTitleText>
      <WinBtns $gap={29}>
        <Minus size={14} strokeWidth={1} />
        <Square size={14} strokeWidth={1} />
        <X size={16} strokeWidth={1} />
      </WinBtns>
    </JTitle>
    <JMenu>
      {MENU.map(([first, rest]) => (
        <span key={first}><u>{first}</u>{rest}</span>
      ))}
    </JMenu>
    <JTools>
      {ToolIcons.map((group, i) => (
        <React.Fragment key={i}>
          {i > 0 && <ToolSep />}
          {group.map((icon, j) => <ToolSlot key={j}>{svg(icon)}</ToolSlot>)}
        </React.Fragment>
      ))}
      <Status>
        <span>00:00:20</span>
        <svg width="24" height="24" viewBox="0 0 24 24"><path d="M12 2 23 23H1z" fill="#f4d31c" stroke="#8a7a10" /><path d="M12 9v8M12 19v2" stroke="#222" strokeWidth="2.200" /></svg>
        <StatusRed>2</StatusRed>
        <span>1/1</span>
        <Ball />
      </Status>
    </JTools>
    <JBody>
      <TreePane>
        <TreeGuide $x={5} $top={20} $h={100} />
        <TreeGuide $x={25} $top={40} $h={80} />
        <TreeRow $indent={0}>
          <TreeArrow><ChevronDown size={13} /></TreeArrow>
          <FlaskIcon />Test Plan
        </TreeRow>
        <TreeRow $indent={20}>
          <TreeArrow><ChevronDown size={13} /></TreeArrow>
          <GearIcon />Thread Group
        </TreeRow>
        <TreeRow $indent={57}><PipetteIcon />MastersTestAPI</TreeRow>
        <TreeRow $indent={57} $selected><ChartIcon />View Results Tree</TreeRow>
        <TreeRow $indent={57}><ChartIcon />View Results in Table</TreeRow>
        <TreeRow $indent={57}><WatchIcon />Constant Timer</TreeRow>
      </TreePane>
      <VSplit><Dots><i /><i /><i /></Dots></VSplit>
      <RightPane>
        <PaneTitle>View Results Tree</PaneTitle>
        <FormRow $mt={5}>
          <FormLabel $w={69}>Name:</FormLabel>
          <Field>View Results Tree</Field>
        </FormRow>
        <FormRow $mt={7}>
          <FormLabel $w={69}>Comments:</FormLabel>
          <Field />
        </FormRow>
        <Legend>Write results to file / Read from file</Legend>
        <FormRow $mt={2} $pl={4}>
          <FormLabel $w={55}>Filename</FormLabel>
          <Field $w={643} />
          <JButton $w={65} $h={22} $size={9} $ml={9}>Browse...</JButton>
          <SmallText $size={11.6} $ml={7} $mr={12}>Log/Display Only:</SmallText>
          <CheckBox />
          <SmallText $size={11}>Errors</SmallText>
          <CheckBox $ml={11} />
          <SmallText $size={11}>Successes</SmallText>
          <JButton $w={81} $ml={7} $size={12.4}>Configure</JButton>
        </FormRow>
        <HSplit $mt={9}><Tri /><Tri $down /><HDots><Dots $row><i /><i /><i /></Dots></HDots></HSplit>
        <FormRow $mt={7} $pl={5}>
          <FormLabel $w={38} $size={10.6}>Search:</FormLabel>
          <Field $w={187} $bg="#3f4345" />
          <CheckBox $ml={14} />
          <SmallText $size={9.6}>Case sensitive</SmallText>
          <CheckBox $ml={11} />
          <SmallText $size={10}>Regular exp.</SmallText>
          <JButton $w={63} $ml={2}>Search</JButton>
          <JButton $w={56} $ml={9}>Reset</JButton>
        </FormRow>
        <HSplit $mt={7}><Tri /><Tri $down /><HDots><Dots $row><i /><i /><i /></Dots></HDots></HSplit>
        <ResultSplit>
          <ResultList>
            <Combo>Text<ComboTri /></Combo>
            <ResultRows>
              {RESULT_ROWS.map((i) => (
                <ResultRow key={i}><ShieldIcon />MastersTestAPI</ResultRow>
              ))}
            </ResultRows>
            <ScrollAuto><CheckBox>✓</CheckBox>Scroll automatically?</ScrollAuto>
          </ResultList>
          <VSplit $both><Dots><i /><i /><i /></Dots></VSplit>
          <ResultDetail>
            <TabsRow>
              <span>Sampler result</span>
              <span>Request</span>
              <ActiveTab>Response data</ActiveTab>
            </TabsRow>
            <SubTab><SubTabLabel>Response Body</SubTabLabel></SubTab>
            <DetailSearch>
              <SmallText>Case sensitive</SmallText>
              <CheckBox $ml={6} />
              <SmallText>Regular exp.</SmallText>
            </DetailSearch>
          </ResultDetail>
        </ResultSplit>
      </RightPane>
    </JBody>
  </JMeterWin>
);

const Word = () => (
  <WordWin $x={1519} $y={0} $w={198} $h={1032}>
    <WordTop>
      <Gem size={20} strokeWidth={1} />
      <Minus size={18} strokeWidth={1} />
      <Copy size={15} strokeWidth={1} />
      <X size={18} strokeWidth={1} />
    </WordTop>
    <WordActions>
      <EditingBtn><Pencil size={17} strokeWidth={1.200} />Editing<ChevronDown size={10} /></EditingBtn>
      <ShareBtn><Share size={15} />Share<ShareCaret><ChevronDown size={11} /></ShareCaret></ShareBtn>
    </WordActions>
    <Ribbon>
      <RibbonCut>
        <RibbonIcon><BlueCut /></RibbonIcon>
        <RibbonText>or</RibbonText>
        <RibbonFoot>or</RibbonFoot>
      </RibbonCut>
      <RibbonGroup>
        <RibbonIcon><AddInsIcon /></RibbonIcon>
        <RibbonText>Add-ins</RibbonText>
        <RibbonFoot>Add-ins</RibbonFoot>
      </RibbonGroup>
      <RibbonEnd><ChevronDown size={16} strokeWidth={1.300} /></RibbonEnd>
    </Ribbon>
    <WordStatus>
      -<ZoomTrack />+<ZoomPct>100%</ZoomPct>
    </WordStatus>
  </WordWin>
);

const Browser = () => (
  <ChromeWin $x={1717} $y={0} $w={1920} $h={1032}>
    <TabStrip>
      {TABS.map((t) => (
        <Tab key={t.label} $active={t.active} $noline={t.noline}>
          {t.icon}
          <TabLabel>{t.label}</TabLabel>
          <X size={13} strokeWidth={2} />
        </Tab>
      ))}
      <NewTab><Plus size={18} strokeWidth={2} /></NewTab>
      <ChromeCtl>
        <ChevronDown size={15} strokeWidth={1.200} />
        <Minus size={14} strokeWidth={1.500} />
        <Copy size={14} strokeWidth={1.500} />
        <X size={16} strokeWidth={1.300} />
      </ChromeCtl>
    </TabStrip>
    <UrlBar>
      <NavBtn><ArrowLeft size={20} /></NavBtn>
      <NavBtn $off><ArrowRight size={20} /></NavBtn>
      <NavBtn><RotateCw size={17} /></NavBtn>
      <NavBtn><Home size={18} /></NavBtn>
      <Omni>
        <Lock size={12} fill="#5f6368" />
        <span><UrlHost>us-east-1.console.aws.amazon.com</UrlHost>/fis/home?region=us-east-1#StartExperiment:ExperimentTemplateId=EXT3RgQFrUwwCeux4</span>
        <OmniRight>
          <Share size={16} />
          <Star size={16} />
        </OmniRight>
      </Omni>
      <ExtIcons>
        <ExtSync />
        <ExtVideo />
        <Puzzle size={18} fill="#5f6368" />
        <SidePanel />
        <Avatar />
      </ExtIcons>
      <UpdatePill>Update<KebabDots><i /><i /><i /></KebabDots></UpdatePill>
    </UrlBar>
    <Bookmarks>
      {BOOKMARKS.map((b) => (
        <Bookmark key={b.label} $w={b.w}>{b.icon}{b.label}</Bookmark>
      ))}
    </Bookmarks>
    <AwsNav>
      <AwsLogo>
        aws
        <svg width="30" height="8" viewBox="0 0 30 8"><path d="M1 1c8 6 18 6 27 1" fill="none" stroke="#f0f2f2" strokeWidth="2" /></svg>
      </AwsLogo>
      <AwsServices><ServicesGrid />Services</AwsServices>
      <AwsSearch>
        <Search size={16} />
        <AwsSearchText>Search</AwsSearchText>
        <span>[Alt+S]</span>
      </AwsSearch>
      <AwsRight>
        <AwsNavIcon><Terminal size={18} /></AwsNavIcon>
        <AwsNavIcon><Bell size={18} /></AwsNavIcon>
        <AwsNavIcon><CircleHelp size={18} /></AwsNavIcon>
        <AwsNavIcon><Settings size={18} /></AwsNavIcon>
        <AwsMenu>N. Virginia<SmallTri /></AwsMenu>
        <AwsMenu $last>Bruno Rodrigues Franco<SmallTri /></AwsMenu>
      </AwsRight>
    </AwsNav>
    <AwsContent>
      <Rail $w={41}><Menu size={20} /></Rail>
      <AwsMain>
        <Crumbs>
          <CrumbLink>AWS FIS</CrumbLink>
          <ChevronRight size={18} strokeWidth={1.200} />
          <CrumbLink>Experiment templates</CrumbLink>
          <ChevronRight size={18} strokeWidth={1.200} />
          <CrumbLink>EXT3RgQFrUwwCeux4</CrumbLink>
          <ChevronRight size={18} strokeWidth={1.200} />
          <CrumbNow>Start experiment</CrumbNow>
        </Crumbs>
        <PageTitle>Start experiment EXT3RgQFrUwwCeux4</PageTitle>
        <PageDesc>
          Start your experiment with a snapshot of the current experiment state and template. After the experiment starts, you can<br />
          make changes to the experiment template without affecting this experiment.
        </PageDesc>
        <InfoBox>
          <InfoGlyph><Info size={32} strokeWidth={2.200} /></InfoGlyph>
          <InfoBody>
            <InfoHead>Logging is not enabled</InfoHead>
            Logging is not enabled for this experiment. You can <InfoLink>configure logging</InfoLink> <ExternalLink size={13} /> and then refresh<br />
            this page.
          </InfoBody>
          <RefreshBtn><RotateCw size={16} />Refresh</RefreshBtn>
        </InfoBox>
        <Card>
          <CardHead>
            <CardTitle>Experiment tags</CardTitle>
            <CardSub>Associate tags with this experiment.</CardSub>
          </CardHead>
          <CardBody>
            No tags associated with the resource.
            <TagBtn>Add new tag</TagBtn>
            <TagHint>You can add 50 more tags.</TagHint>
          </CardBody>
        </Card>
      </AwsMain>
      <Rail $w={40} $right><Info size={18} /></Rail>
    </AwsContent>
    <AwsFooter>
      <Terminal size={14} />
      <FootLink>CloudShell</FootLink>
      <FootLink $ml={17}>Feedback</FootLink>
      <FootLink $auto>© 2023, Amazon Web Services, Inc. or its affiliates.</FootLink>
      <FootLink $ml={22}>Privacy</FootLink>
      <FootLink $ml={16}>Terms</FootLink>
      <FootLink $ml={16}>Cookie preferences</FootLink>
    </AwsFooter>
  </ChromeWin>
);

const StartModal = () => (
  <Modal $x={2377} $y={410} $w={600} $h={322}>
    <ModalHead>
      Start experiment
      <X size={20} strokeWidth={2} />
    </ModalHead>
    <ModalBody>
      <Alert>
        <TriangleAlert size={16} strokeWidth={2} />
        <div>
          You are about to start your experiment, which might perform destructive<br />
          actions on your AWS resources. Before you run fault injection experiments,<br />
          review the best practices and planning guidelines. <LearnMore>Learn more <ExternalLink size={14} strokeWidth={2.400} /></LearnMore>
        </div>
      </Alert>
      <ConfirmLabel>To confirm that you want to start the experiment, enter <em>start</em> in the field:</ConfirmLabel>
      <ConfirmInput>start</ConfirmInput>
    </ModalBody>
    <ModalFoot>
      <CancelBtn>Cancel</CancelBtn>
      <PrimaryBtn>Start experiment</PrimaryBtn>
    </ModalFoot>
  </Modal>
);

const ClockApp = () => (
  <ClockWin $x={670} $y={313} $w={727} $h={507}>
    <ClockSide>
      <SideItem $h={36}><Menu size={20} strokeWidth={1.200} /></SideItem>
      {SIDE_ITEMS.map((item, i) => (
        <SideItem key={i} $active={item.active}>{item.icon}</SideItem>
      ))}
      <SideItem $auto><Initials>BF</Initials></SideItem>
      <SideItem><Settings size={18} strokeWidth={1.200} /></SideItem>
    </ClockSide>
    <ClockMain>
      <ClockTitle>
        <ClockAppIcon />
        <ClockTitleName>Clock</ClockTitleName>
        <WinBtns $gap={31} $pr={16} $color="#9a9a9a">
          <Minus size={13} strokeWidth={1} />
          <Square size={13} strokeWidth={1} />
          <X size={15} strokeWidth={1} />
        </WinBtns>
      </ClockTitle>
      <ExpandRow>
        <MoveDiagonal size={18} strokeWidth={1.200} />
        <MiniIcon />
      </ExpandRow>
      <TimeRow>00:00:50<Fraction>.92</Fraction></TimeRow>
      <UnitRow><Unit>hr</Unit><Unit>min</Unit><Unit>sec</Unit></UnitRow>
      <ButtonRow>
        <RoundBtn $primary><PauseIcon /></RoundBtn>
        <RoundBtn><FlagIcon /></RoundBtn>
        <RoundBtn><ResetIcon /></RoundBtn>
      </ButtonRow>
    </ClockMain>
  </ClockWin>
);

export default function App() {
  return (
    <Desktop>
      <GlobalStyle />
      <Word />
      <JMeter />
      <ClockApp />
      <Browser />
      <StartModal />
    </Desktop>
  );
}
